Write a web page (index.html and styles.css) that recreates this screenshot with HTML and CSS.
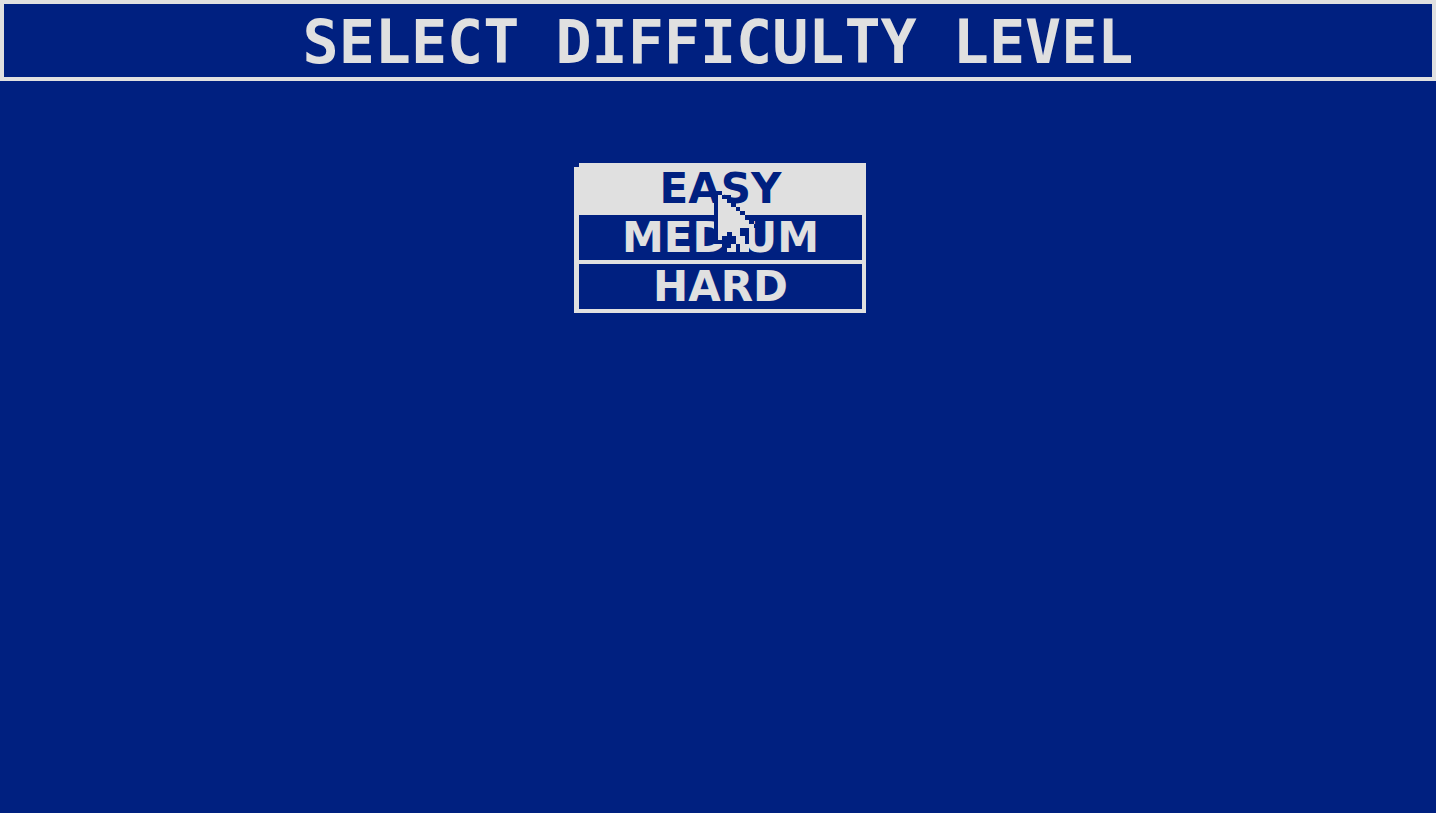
FILE: index.html
```
<!DOCTYPE html>
<html lang="en">
<head>
<meta charset="utf-8">
<title>Select Difficulty Level</title>
<link rel="stylesheet" href="styles.css">
</head>
<body>
<header class="banner"><h1 class="title">SELECT DIFFICULTY LEVEL</h1></header>
<main class="screen">
<div class="menu">
<button class="option selected" type="button">EASY</button>
<button class="option" type="button">MEDIUM</button>
<button class="option" type="button">HARD</button>
<svg class="pointer" viewBox="0 0 45 62" shape-rendering="crispEdges" aria-hidden="true">
<path class="pointer-edge" d="M0 0H8V4H17V12H22V16H26V20H31V24H35V29H40V33H44V37H35V62H8V53H0Z"/>
<path class="pointer-fill" d="M4 4H8V8H13V12H17V16H22V20H26V24H31V29H35V33H40V37H26V45H31V53H35V61H26V53H22V61H13V57H17V53H22V45H18V41H13V45H8V49H4Z"/>
</svg>
</div>
</main>
</body>
</html>
```
FILE: styles.css
```
* { box-sizing: border-box; }
body {
  margin: 0;
  min-height: 100vh;
  background: #002080;
  color: #e0e0e0;
}
.banner {
  border: 4px solid #e0e0e0;
  padding: 3px 0 0;
}
.title {
  margin: 0;
  font: bold 60px/70px "DejaVu Sans Mono", monospace;
  text-align: center;
}
.screen {
  display: flex;
  justify-content: center;
  padding: 82px 0 0 4px;
}
.menu {
  position: relative;
  display: flex;
  flex-direction: column;
  gap: 4px;
  width: 292px;
  padding: 4px 4px 4px 5px;
  background: #e0e0e0;
}
.menu::before {
  content: "";
  position: absolute;
  top: 0;
  left: 0;
  width: 5px;
  height: 4px;
  background: #002080;
}
.option {
  border: 0;
  border-radius: 0;
  margin: 0;
  padding: 0;
  background: #002080;
  color: #e0e0e0;
  font: bold 42px/45px "DejaVu Sans", sans-serif;
  text-align: center;
}
.selected {
  background: #e0e0e0;
  color: #002080;
  line-height: 44px;
}
.pointer {
  position: absolute;
  top: 28px;
  left: 140px;
  width: 45px;
  height: 62px;
}
.pointer-edge { fill: #002080; }
.pointer-fill { fill: #e0e0e0; }
```
